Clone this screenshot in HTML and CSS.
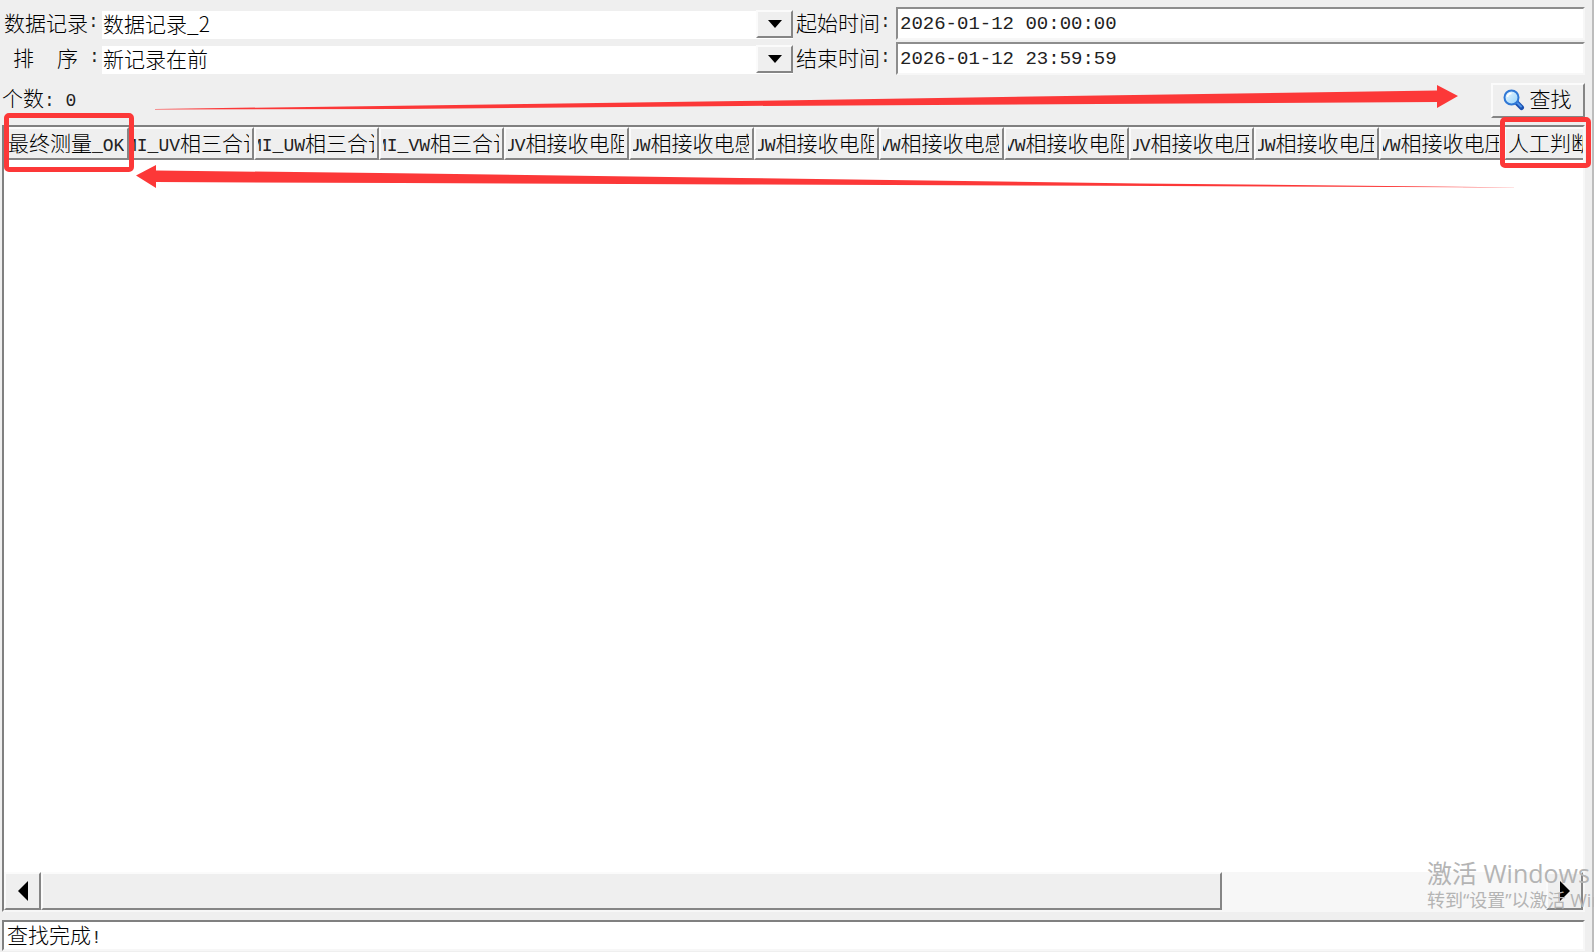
FILE: index.html
```html
<!DOCTYPE html>
<html lang="zh-CN">
<head>
<meta charset="utf-8">
<title>数据记录</title>
<link rel="stylesheet" href="styles.css">
</head>
<body>
<main class="panel">
  <form class="filters">
    <label class="label" for="record">数据记录<span class="mono">:</span></label>
    <div class="combo">
      <select id="record"><option>数据记录_2</option></select>
      <span class="drop"><svg width="14" height="8" viewBox="0 0 14 8"><path d="M0 0H14L7 8Z"/></svg></span>
    </div>
    <label class="label" for="start">起始时间<span class="mono">:</span></label>
    <input class="date" id="start" type="text" value="2026-01-12 00:00:00">
    <label class="label sort" for="order"><span>排</span><span>序</span><span class="mono">:</span></label>
    <div class="combo">
      <select id="order"><option>新记录在前</option></select>
      <span class="drop"><svg width="14" height="8" viewBox="0 0 14 8"><path d="M0 0H14L7 8Z"/></svg></span>
    </div>
    <label class="label" for="end">结束时间<span class="mono">:</span></label>
    <input class="date" id="end" type="text" value="2026-01-12 23:59:59">
  </form>

  <div class="toolbar">
    <div class="count">个数<span class="mono">: 0</span></div>
    <button class="find" type="button">
      <svg width="22" height="22" viewBox="0 0 22 22">
        <defs><linearGradient id="lens" x1="0" y1="0" x2="1" y2="1"><stop offset="0" stop-color="#f2fbff"/><stop offset="1" stop-color="#8fd0fb"/></linearGradient></defs>
        <path d="M14 14L18.500 18.500" stroke="#1b50b0" stroke-width="5" stroke-linecap="round"/>
        <path d="M14 13.500L18 17.500" stroke="#4c93ea" stroke-width="2" stroke-linecap="round"/>
        <circle cx="8.500" cy="8.500" r="7" fill="url(#lens)" stroke="#2f78d6" stroke-width="2"/>
        <path d="M4.500 8A4 4 0 0 1 8.500 4.500" fill="none" stroke="#fff" stroke-width="1.500"/>
      </svg>
      <span class="find-text">查找</span>
    </button>
  </div>

  <section class="grid">
    <table class="records">
      <colgroup><col class="c"><col class="c"><col class="c"><col class="c"><col class="c"><col class="c"><col class="c"><col class="c"><col class="c"><col class="c"><col class="c"><col class="c"><col></colgroup>
      <thead><tr>
        <th><div>最终测量<span class="mono">_OK</span></div></th>
        <th><div class="cut-long"><span class="mono">MI_UV</span>相三合计</div></th>
        <th><div class="cut-long"><span class="mono">MI_UW</span>相三合计</div></th>
        <th><div class="cut-long"><span class="mono">MI_VW</span>相三合计</div></th>
        <th><div class="cut"><span class="mono">UV</span>相接收电阻</div></th>
        <th><div class="cut"><span class="mono">UW</span>相接收电感</div></th>
        <th><div class="cut"><span class="mono">UW</span>相接收电阻</div></th>
        <th><div class="cut"><span class="mono">VW</span>相接收电感</div></th>
        <th><div class="cut"><span class="mono">VW</span>相接收电阻</div></th>
        <th><div class="cut"><span class="mono">UV</span>相接收电压</div></th>
        <th><div class="cut"><span class="mono">UW</span>相接收电压</div></th>
        <th><div class="cut"><span class="mono">VW</span>相接收电压</div></th>
        <th class="last"><div>人工判断</div></th>
      </tr></thead>
    </table>
    <div class="rows"></div>
    <div class="scrollbar">
      <button class="step" type="button" aria-label="向左"><svg width="10" height="20" viewBox="0 0 10 20"><path d="M10 0V20L0 10Z"/></svg></button>
      <div class="track"><div class="thumb"></div></div>
      <button class="step" type="button" aria-label="向右"><svg width="10" height="20" viewBox="0 0 10 20"><path d="M0 0V20L10 10Z"/></svg></button>
    </div>
  </section>

  <footer class="status">查找完成<span class="mono">!</span></footer>
</main>

<div class="mark mark-first"></div>
<div class="mark mark-last"></div>
<svg class="arrows" viewBox="0 0 1594 952" preserveAspectRatio="none">
  <path d="M155 109L740 101L1100 95.500L1437 90.500V85L1458 96L1437 108V102L1100 104L740 106L400 109L155 109.600Z"/>
  <path d="M136 175.500L156 165V170.500L400 173.300L740 178L1140 183.500L1530 187.500L1100 185.700L740 184.500L400 183L156 182V188Z"/>
</svg>
<div class="watermark">
  <div class="wm-title">激活 Windows</div>
  <div class="wm-text">转到“设置”以激活 Windows。</div>
</div>
</body>
</html>
```
FILE: styles.css
```css
* { box-sizing: border-box; }
html, body { height: 100%; }
body {
  margin: 0;
  position: relative;
  overflow: hidden;
  background: #efefef;
  color: #000;
  font: 300 21px/26px "Noto Sans CJK SC", sans-serif;
}
.mono { color: #222; font: 400 18px/26px "Liberation Mono", monospace; white-space: pre; }
.panel {
  height: 100%;
  display: flex;
  flex-direction: column;
  padding: 7px 7px 1px 2px;
  border-right: 2px solid #bdbdbd;
}
.filters {
  display: grid;
  grid-template-columns: 100px minmax(0, 691fr) 103px minmax(0, 689fr);
  grid-auto-rows: 33px;
  row-gap: 2px;
  align-items: center;
}
.label { display: flex; white-space: nowrap; padding: 0 0 4px 2px; }
.combo + .label { padding-left: 3px; }
.label.sort { padding-left: 11px; }
.sort span + span { margin-left: 23px; }
.sort span + .mono { margin-left: 11px; }
.combo { position: relative; height: 28px; }
select {
  width: 100%;
  height: 28px;
  padding: 0 38px 4px 1px;
  border: 0;
  border-radius: 0;
  appearance: none;
  background: #fff;
  color: inherit;
  font: 300 21px/24px "Noto Sans CJK SC", sans-serif;
}
.drop {
  position: absolute;
  right: 0;
  top: 0;
  width: 37px;
  height: 28px;
  display: flex;
  align-items: center;
  justify-content: center;
  pointer-events: none;
}
.drop, .find, .step, .thumb {
  background: #efefef;
  border: 2px solid;
  border-color: #fbfbfb #858585 #858585 #fbfbfb;
}
.date {
  width: 100%;
  height: 33px;
  padding: 0 2px;
  border: 2px solid;
  border-color: #8d8d8d #f7f7f7 #f7f7f7 #8d8d8d;
  border-radius: 0;
  background: #fff;
  color: #222;
  font: 400 19px/26px "Liberation Mono", monospace;
}
.toolbar {
  display: flex;
  justify-content: space-between;
  align-items: center;
  padding-top: 7px;
  height: 43px;
}
.count { padding-bottom: 2px; white-space: nowrap; }
.find {
  width: 94px;
  height: 35px;
  padding: 0 2px 0 0;
  display: flex;
  align-items: center;
  justify-content: center;
  gap: 5px;
  color: inherit;
  font: inherit;
}
.find-text { padding-bottom: 4px; }
.grid {
  flex: 1;
  min-height: 0;
  display: flex;
  flex-direction: column;
  margin-top: 7px;
  border: 2px solid;
  border-color: #808080 #f7f7f7 #f7f7f7 #808080;
  background: #fff;
}
.records { width: 100%; table-layout: fixed; border-collapse: separate; border-spacing: 0; }
.c { width: 125px; }
th {
  height: 33px;
  padding: 0 3px 0 2px;
  background: #efefef;
  border: 2px solid;
  border-color: #fbfbfb #858585 #858585 #fbfbfb;
  font-weight: 300;
  text-align: left;
}
th.last { padding-right: 0; border-right: 0; }
th div { height: 28px; line-height: 24px; overflow: hidden; white-space: nowrap; }
th .mono { line-height: 24px; }
.cut { text-indent: -4px; }
.cut-long { text-indent: -7px; }
.rows { flex: 1; }
.scrollbar { height: 38px; display: flex; background: #f7f7f7; }
.step { width: 37px; height: 38px; padding: 0; display: flex; align-items: center; justify-content: center; }
.track { flex: 1; }
.thumb { width: 78.5%; height: 38px; }
.status {
  height: 31px;
  margin-top: 8px;
  padding-left: 3px;
  border: 2px solid;
  border-color: #808080 #f7f7f7 #f7f7f7 #808080;
  background: #fff;
  line-height: 24px;
}
.status .mono { line-height: 24px; }
.mark { position: absolute; border: 5px solid #fc3838; border-radius: 5px; }
.mark-first { left: 4px; top: 113px; width: 130px; height: 59px; }
.mark-last { right: 3px; top: 117px; width: 91px; height: 51px; }
.arrows { position: absolute; inset: 0; width: 100%; height: 100%; fill: #fc3838; pointer-events: none; }
.watermark {
  position: absolute;
  left: calc(100% - 167px);
  bottom: 39px;
  color: #b4b4b4;
  white-space: nowrap;
  pointer-events: none;
}
.wm-title { font: 400 25px/28px "Open Sans", "Noto Sans CJK SC", sans-serif; }
.wm-text { font: 400 18px/26px "Open Sans", "Noto Sans CJK SC", sans-serif; }
```
